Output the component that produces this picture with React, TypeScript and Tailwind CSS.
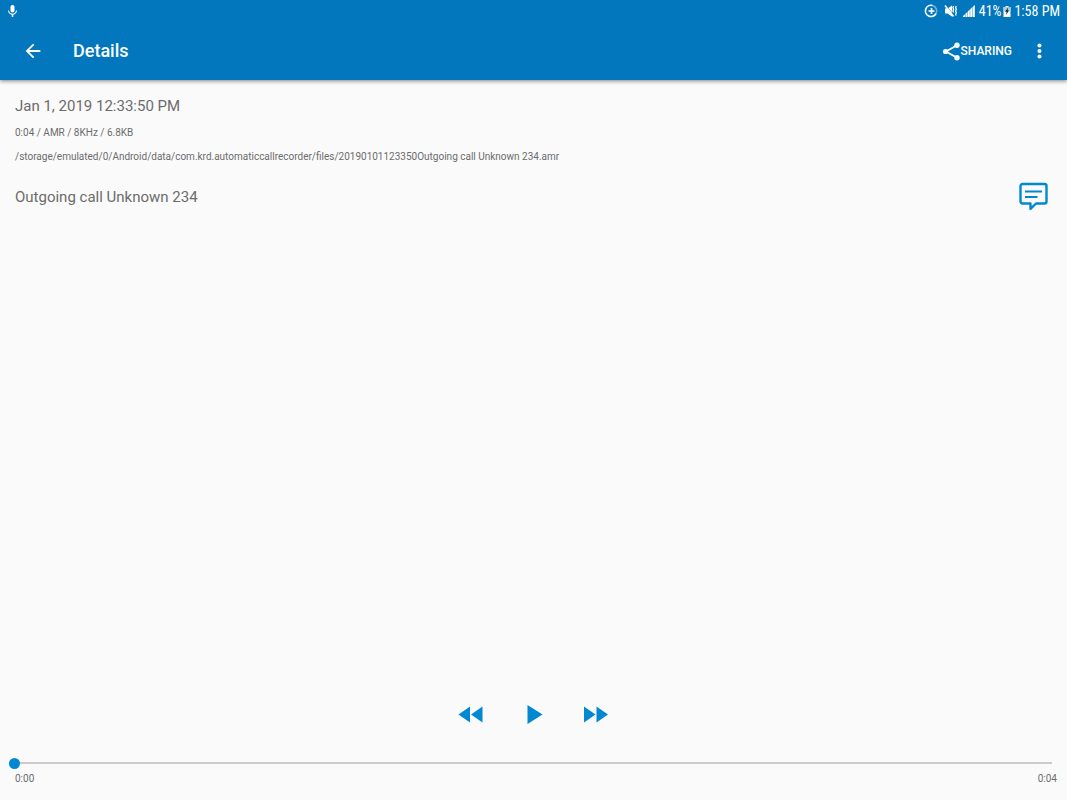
import { useState } from "react";

function StatusBar() {
  return (
    <div className="flex h-[22px] items-center justify-between pl-[6px] pr-[7px]">
      <svg className="size-[13px]" viewBox="0 0 24 26" fill="currentColor" aria-hidden="true">
        <path d="M12 15c2.200 0 4-1.800 4-4V4c0-2.200-1.800-4-4-4S8 1.800 8 4v7c0 2.200 1.800 4 4 4zm7-4c0 3.800-3.200 6.600-7 6.600S5 14.800 5 11H3c0 4.600 3.400 7.800 7.500 8.400V24h3v-4.600c4.100-.6 7.500-3.800 7.500-8.400z" />
      </svg>
      <div className="flex items-center font-['Roboto_Condensed',Roboto,sans-serif] text-[14px] leading-[22px]">
        <svg className="size-[14px]" viewBox="0 0 14 14" fill="none" stroke="currentColor" aria-hidden="true">
          <path d="M8.500 1.500A5.600 5.600 0 1 0 12 9.500" strokeWidth="1.700" />
          <path d="M8.500 1.500A5.600 5.600 0 0 1 12 9.500" strokeWidth="1.500" opacity="0.45" />
          <path d="M7.500 4v6M4.500 7h6" strokeWidth="1.700" />
        </svg>
        <svg className="ml-[6px] h-[14px] w-[14px]" viewBox="0 0 14 14" aria-hidden="true">
          <path d="M1 4.500h2.500L8 1.500v11L3.500 9.500H1z" fill="currentColor" />
          <path d="M1.800 1.200l8 10" stroke="#0277bd" strokeWidth="0.700" />
          <path d="M1 1.500l8.500 11" stroke="currentColor" strokeWidth="1.500" />
          <path d="M9.600 2l-.7 1.600.7 1.700-.7 1.700.7 1.500M12.300 2l-.7 1.600.7 1.700-.7 1.700.7 1.700-.7 1.700.5 1.200" fill="none" stroke="currentColor" strokeWidth="1.300" />
        </svg>
        <svg className="ml-[5px] h-3 w-3" viewBox="0 0 12 12" fill="currentColor" aria-hidden="true">
          <path d="M0 12V11l2-1.800V12zM2.400 12V8.800l2-1.900V12zM4.800 12V6.500l2-2V12zM7.200 12V4.200l2-2V12zM9.600 12V1.900L11.800 0v12z" />
        </svg>
        <span className="ml-[4px]">41%</span>
        <svg className="ml-[2px] mr-[3px] h-3 w-2" viewBox="0 0 8 12" aria-hidden="true">
          <path d="M2.500 1h3v1H7.500V12H.5V2h2z" fill="currentColor" />
          <path d="M.5 2h7v4h-7z" fill="#a9cbe0" />
          <path d="M5.200 2.500L2 6.800h1.700L3 10l3-4.500H4.500z" fill="#102027" />
        </svg>
        <span>1:58 PM</span>
      </div>
    </div>
  );
}

function AppBar() {
  return (
    <div className="flex h-[58px] items-center pl-[21px] pr-[16px]">
      <button type="button" aria-label="Back" className="flex size-6 items-center justify-center">
        <svg className="size-[22px]" viewBox="0 0 24 24" fill="currentColor">
          <path d="M20 11H7.830l5.590-5.590L12 4l-8 8 8 8 1.410-1.410L7.830 13H20v-2z" />
        </svg>
      </button>
      <h1 className="ml-7 flex-1 text-[18px] font-medium leading-[26px]">Details</h1>
      <button type="button" className="flex items-center text-[12px] font-medium leading-6">
        <svg className="h-[19px] w-[19px]" viewBox="0 0 19 19" aria-hidden="true">
          <path d="M15 3.300L4 9.500l11 6.300" fill="none" stroke="currentColor" strokeWidth="1.800" />
          <circle cx="3.500" cy="9.500" r="2.600" fill="currentColor" />
          <circle cx="15" cy="3.300" r="2.700" fill="currentColor" />
          <circle cx="15" cy="15.800" r="2.700" fill="currentColor" />
        </svg>
        SHARING
      </button>
      <button type="button" aria-label="More options" className="ml-[15px] flex size-6 items-center justify-center">
        <svg className="size-[22px]" viewBox="0 0 24 24" fill="currentColor">
          <circle cx="12.500" cy="6" r="2.200" />
          <circle cx="12.500" cy="12" r="2.200" />
          <circle cx="12.500" cy="18" r="2.200" />
        </svg>
      </button>
    </div>
  );
}

export default function App() {
  const [position, setPosition] = useState(0);

  return (
    <div className="flex min-h-screen flex-col bg-[#fafafa] font-[Roboto,sans-serif] text-[#6c6c6c]">
      <header className="bg-[#0277bd] text-white shadow-[0_1px_4px_rgba(0,0,0,0.5)]">
        <StatusBar />
        <AppBar />
      </header>

      <main className="flex flex-1 flex-col">
        <section className="px-[15px] pt-[14px]">
          <p className="text-[15px] leading-6">Jan 1, 2019 12:33:50 PM</p>
          <p className="mt-[3px] text-[10px] leading-6">0:04 / AMR / 8KHz / 6.8KB</p>
          <p className="break-words text-[10px] leading-6">
            /storage/emulated/0/Android/data/com.krd.automaticcallrecorder/files/20190101123350Outgoing call Unknown 234.amr
          </p>
          <div className="mt-[11px] flex items-center justify-between pr-[4px]">
            <p className="text-[15px] leading-[34px]">Outgoing call Unknown 234</p>
            <button type="button" aria-label="Add note" className="text-[#0288d1]">
              <svg className="h-[30px] w-[29px]" viewBox="0 0 29 30" fill="none" stroke="currentColor">
                <path d="M3.500 2h22a2 2 0 0 1 2 2v15.500a2 2 0 0 1-2 2H17l-5.500 5.500v-5.500h-8a2 2 0 0 1-2-2V4a2 2 0 0 1 2-2z" strokeWidth="2.400" strokeLinejoin="round" />
                <path d="M6 9.500h17M6 15h12.500" strokeWidth="2.200" />
              </svg>
            </button>
          </div>
        </section>

        <section className="mt-auto">
          <div className="flex items-center justify-center gap-[38px] pr-px text-[#0288d1]">
            <button type="button" aria-label="Rewind">
              <svg className="h-6 w-[26px]" viewBox="0 0 26 24" fill="currentColor">
                <path d="M13 4.500v16L1.500 12.500zM25.500 4.500v16L14 12.500z" />
              </svg>
            </button>
            <button type="button" aria-label="Play">
              <svg className="h-6 w-[24px]" viewBox="0 0 24 24" fill="currentColor">
                <path d="M6.500 3v19L21.500 12.500z" />
              </svg>
            </button>
            <button type="button" aria-label="Fast forward">
              <svg className="h-6 w-[26px]" viewBox="0 0 26 24" fill="currentColor">
                <path d="M1 4.500v16l11.500-8zM13.500 4.500v16L25 12.500z" />
              </svg>
            </button>
          </div>
          <div className="mt-[29px] pl-[9px] pr-[15px]">
            <input
              type="range"
              aria-label="Playback position"
              min={0}
              max={4}
              value={position}
              onChange={(event) => setPosition(Number(event.target.value))}
              className="block h-4 w-full appearance-none bg-transparent [&::-webkit-slider-runnable-track]:h-[2px] [&::-webkit-slider-runnable-track]:bg-[#cbcbcb] [&::-webkit-slider-thumb]:-mt-[4px] [&::-webkit-slider-thumb]:size-[11px] [&::-webkit-slider-thumb]:appearance-none [&::-webkit-slider-thumb]:rounded-full [&::-webkit-slider-thumb]:bg-[#0288d1]"
            />
          </div>
          <div className="flex justify-between pb-[13px] pl-[15px] pr-[10px] text-[10px] leading-4">
            <span>{`0:0${position}`}</span>
            <span>0:04</span>
          </div>
        </section>
      </main>
    </div>
  );
}
